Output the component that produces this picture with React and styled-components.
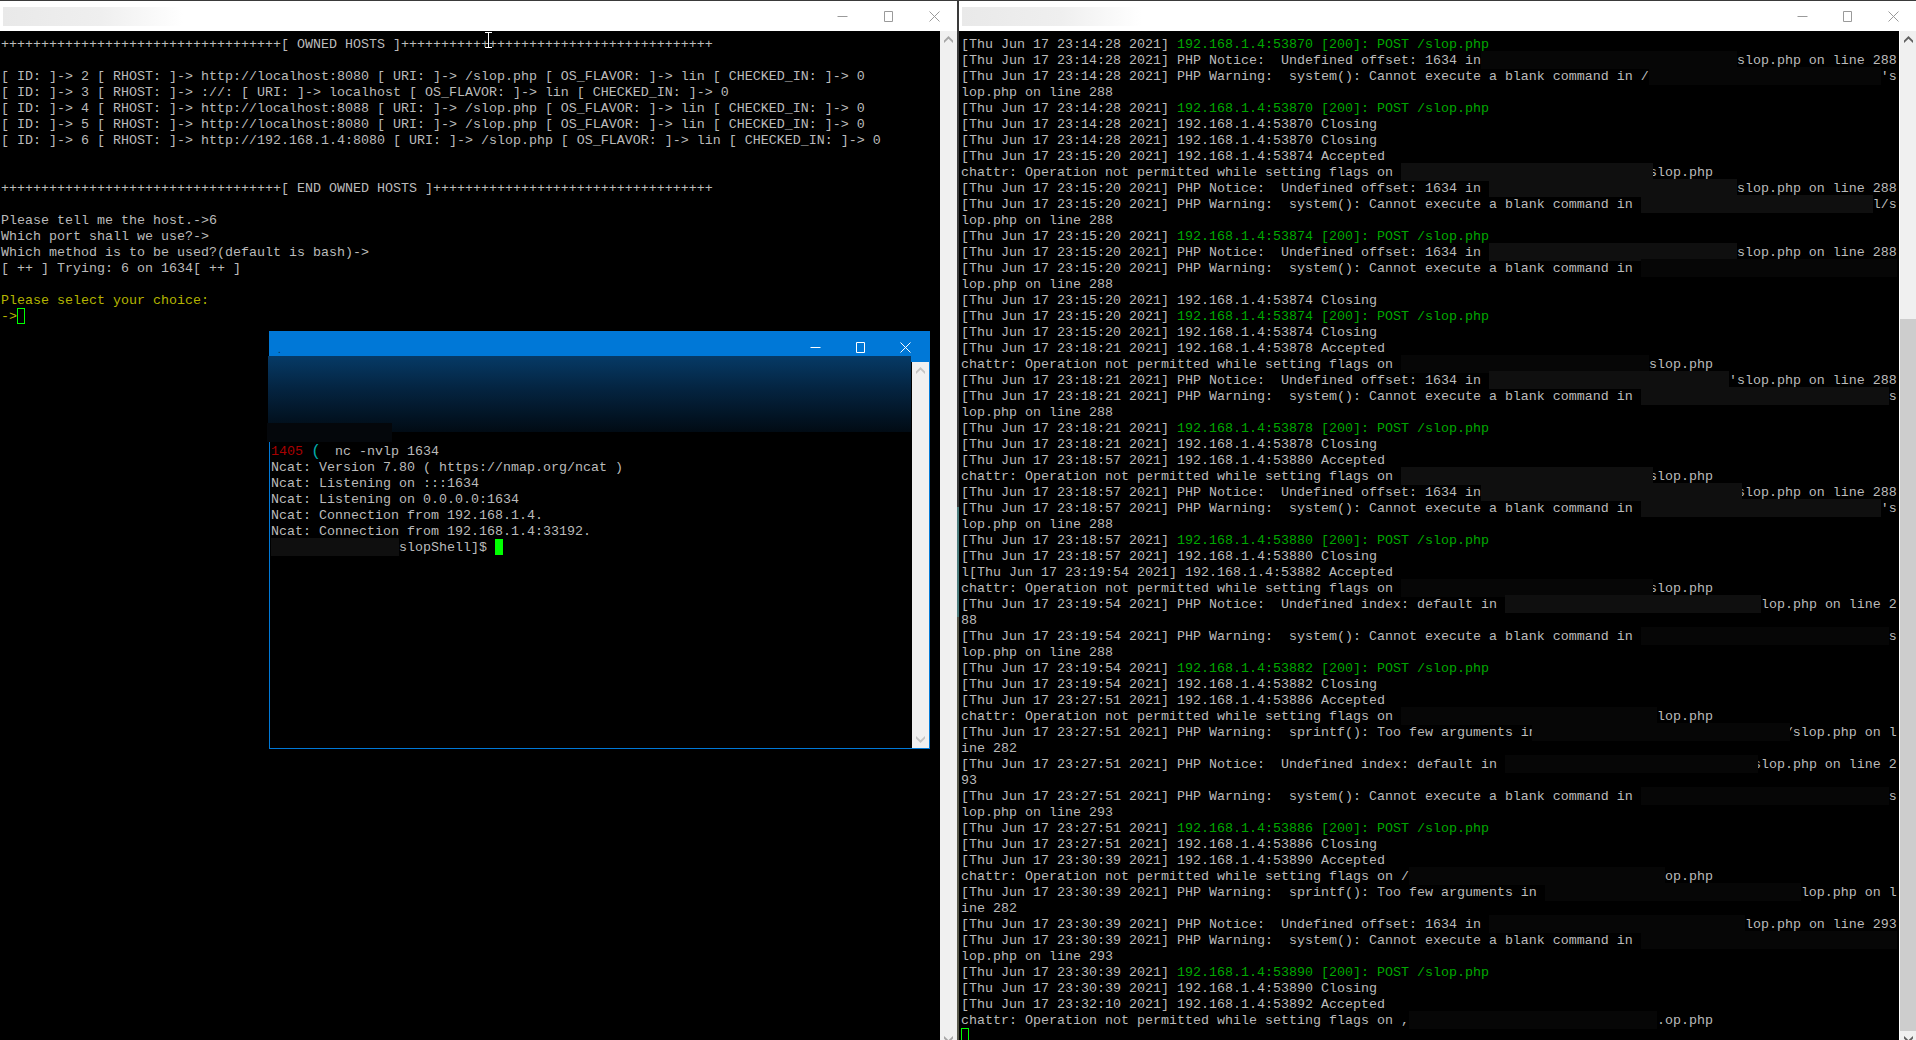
import React from "react";
import styled, { createGlobalStyle } from "styled-components";

const GlobalStyle = createGlobalStyle`
  html, body {
    margin: 0;
    padding: 0;
    height: 100%;
    background: #000;
    overflow: hidden;
  }
`;

const Desktop = styled.div`
  position: relative;
  display: flex;
  width: 1916px;
  height: 1040px;
  overflow: hidden;
  background: #000;
`;

const Window = styled.section`
  position: relative;
  display: flex;
  flex-direction: column;
  width: ${(p) => p.$width}px;
  height: 100%;
  flex: none;
  border-top: 1px solid #3a3a3a;
  box-sizing: border-box;
`;

const Divider = styled.div`
  flex: none;
  width: 2px;
  height: 100%;
  background: linear-gradient(
    to bottom,
    #3a3a3a 0,
    #3a3a3a 507px,
    #4c7c7c 507px,
    #4c7c7c 617px,
    #57574a 617px,
    #57574a 100%
  );
`;

const TitleBar = styled.header`
  flex: none;
  display: flex;
  align-items: center;
  height: 30px;
  background: #fff;
`;

const BlurredTitle = styled.div`
  width: 180px;
  height: 19px;
  margin-left: 3px;
  background: linear-gradient(to right, #e9e9e9 0, #efefef 55%, #fff 100%);
`;

const Controls = styled.div`
  display: flex;
  margin-left: auto;
`;

const ControlButton = styled.div`
  display: flex;
  align-items: center;
  justify-content: center;
  width: ${(p) => p.$size}px;
  height: 30px;
  color: ${(p) => p.$color || "#9a9a9a"};
`;

const Body = styled.div`
  flex: 1;
  display: flex;
  min-height: 0;
`;

// the maximised windows run a little past the bottom of the screen
const Pane = styled(Body)`
  flex: none;
  height: 1017px;
`;

const Console = styled.div`
  flex: 1;
  min-width: 0;
  padding: ${(p) => p.$top || 6}px 0 0 ${(p) => p.$left || 1}px;
  background: #000;
  overflow: hidden;
  font-family: "Liberation Mono", "Courier New", monospace;
  font-size: 13.333px;
  line-height: 16px;
  color: #bbbbbb;
`;

const Row = styled.div`
  height: 16px;
  white-space: pre;
`;

const Green = styled.span`
  color: #00a800;
`;

const Yellow = styled.span`
  color: #b4b400;
`;

const Red = styled.span`
  color: #a80000;
`;

const TealArc = styled.span`
  display: inline-block;
  width: 8px;
  font-size: 17px;
  line-height: 16px;
  vertical-align: top;
  color: #00a8a8;
`;

const Mask = styled.span`
  position: relative;
  z-index: 1;
  display: inline-block;
  width: ${(p) => p.$cols * 8 + (p.$over || 0) + (p.$pull || 0)}px;
  height: 18px;
  margin: -2px ${(p) => -(p.$over || 0)}px 0 ${(p) => -(p.$pull || 0)}px;
  vertical-align: top;
  background: ${(p) => (p.$soft ? "#060606" : "#0f0f0f")};
`;

const OutlineCursor = styled.span`
  display: inline-block;
  width: 8px;
  height: 16px;
  margin-top: -1px;
  box-sizing: border-box;
  vertical-align: top;
  border: 1px solid #00ff00;
`;

const BlockCursor = styled.span`
  display: inline-block;
  width: 8px;
  height: 16px;
  margin-top: -1px;
  vertical-align: top;
  background: #00ff00;
`;

const Scrollbar = styled.div`
  flex: none;
  display: flex;
  flex-direction: column;
  width: ${(p) => p.$width || 17}px;
  background: #f0f0f0;
  border-left: ${(p) => (p.$edge ? "1px solid #fff" : "none")};
`;

const ArrowCell = styled.div`
  flex: none;
  display: flex;
  align-items: center;
  justify-content: center;
  height: 17px;
  color: ${(p) => p.$color || "#a6a6a6"};
`;

const Track = styled.div`
  flex: ${(p) => (p.$fixed ? "none" : 1)};
  height: ${(p) => (p.$fixed ? `${p.$fixed}px` : "auto")};
`;

const Thumb = styled.div`
  flex: 1;
  background: #cdcdcd;
`;

const ShellWindow = styled.section`
  position: absolute;
  left: 269px;
  top: 331px;
  display: flex;
  flex-direction: column;
  width: 661px;
  height: 418px;
  box-sizing: border-box;
  border: 1px solid #0078d7;
  z-index: 2;
`;

const ShellTitleBar = styled.header`
  flex: none;
  display: flex;
  align-items: center;
  height: 30px;
  padding-left: 8px;
  background: #0078d7;
`;

const ShellTitle = styled.span`
  margin-top: 4px;
  font-family: "Liberation Sans", Arial, sans-serif;
  font-size: 10px;
  color: #0b2a44;
`;

const Banner = styled.div`
  position: absolute;
  left: -2px;
  top: 24px;
  width: 643px;
  height: 76px;
  background: linear-gradient(to bottom, #063a66 0, #04233f 45%, #010b14 100%);
`;

const BannerMask = styled.div`
  position: absolute;
  left: -3px;
  top: 91px;
  width: 125px;
  height: 19px;
  background: #04070b;
`;

const IBeam = styled.svg`
  position: absolute;
  left: 484px;
  top: 31px;
  z-index: 1;
`;

const Minimize = () => (
  <svg width="11" height="11" viewBox="0 0 11 11" fill="none" stroke="currentColor">
    <path d="M.5 5.5h10" />
  </svg>
);

const Maximize = () => (
  <svg width="11" height="11" viewBox="0 0 11 11" fill="none" stroke="currentColor">
    <path d="M1.5.5h8v10h-8z" />
  </svg>
);

const Close = () => (
  <svg width="11" height="11" viewBox="0 0 11 11" fill="none" stroke="currentColor">
    <path d="M.5.5l10 10M10.5.5l-10 10" />
  </svg>
);

const ChevronUp = () => (
  <svg width="9" height="7" viewBox="0 0 9 7" fill="currentColor">
    <path d="M4.5 0L9 4.5V7L4.5 2.8 0 7V4.5z" />
  </svg>
);

const ChevronDown = () => (
  <svg width="9" height="7" viewBox="0 0 9 7" fill="currentColor">
    <path d="M4.5 7L9 2.5V0L4.5 4.2 0 0v2.5z" />
  </svg>
);

const WindowButtons = ({ color, sizes }) => (
  <Controls>
    <ControlButton $color={color} $size={sizes[0]}>
      <Minimize />
    </ControlButton>
    <ControlButton $color={color} $size={sizes[1]}>
      <Maximize />
    </ControlButton>
    <ControlButton $color={color} $size={sizes[2]}>
      <Close />
    </ControlButton>
  </Controls>
);

const host = (id, rhost, uri) =>
  `[ ID: ]-> ${id} [ RHOST: ]-> ${rhost} [ URI: ]-> ${uri} [ OS_FLAVOR: ]-> lin [ CHECKED_IN: ]-> 0`;

const ownedHosts = [
  `${"+".repeat(35)}[ OWNED HOSTS ]${"+".repeat(39)}`,
  "",
  host(2, "http://localhost:8080", "/slop.php"),
  host(3, "://:", "localhost"),
  host(4, "http://localhost:8088", "/slop.php"),
  host(5, "http://localhost:8080", "/slop.php"),
  host(6, "http://192.168.1.4:8080", "/slop.php"),
  "",
  "",
  `${"+".repeat(35)}[ END OWNED HOSTS ]${"+".repeat(35)}`,
  "",
  "Please tell me the host.->6",
  "Which port shall we use?->",
  "Which method is to be used?(default is bash)->",
  "[ ++ ] Trying: 6 on 1634[ ++ ]",
  "",
];

const ncat = [
  "Ncat: Version 7.80 ( https://nmap.org/ncat )",
  "Ncat: Listening on :::1634",
  "Ncat: Listening on 0.0.0.0:1634",
  "Ncat: Connection from 192.168.1.4.",
  "Ncat: Connection from 192.168.1.4:33192.",
];

// each log row: plain text, a green post row, or [before, mask, after]
const stamp = (t) => `[Thu Jun 17 ${t} 2021] `;
const chattr = "chattr: Operation not permitted while setting flags on ";
const post = (t, port) => ({ ts: stamp(t), green: `192.168.1.4:${port} [200]: POST /slop.php` });
const state = (t, port, word) => `${stamp(t)}192.168.1.4:${port} ${word}`;
const offset = (t) => `${stamp(t)}PHP Notice:  Undefined offset: 1634 in `;
const index = (t) => `${stamp(t)}PHP Notice:  Undefined index: default in `;
const blank = (t) => `${stamp(t)}PHP Warning:  system(): Cannot execute a blank command in `;
const few = (t) => `${stamp(t)}PHP Warning:  sprintf(): Too few arguments in `;

const log = [
  post("23:14:28", 53870),
  [offset("23:14:28"), { cols: 31, pull: 8, soft: true }, "slop.php on line 288"],
  [`${blank("23:14:28")}/`, { cols: 29, soft: true }, "'s"],
  "lop.php on line 288",
  post("23:14:28", 53870),
  state("23:14:28", 53870, "Closing"),
  state("23:14:28", 53870, "Closing"),
  state("23:15:20", 53874, "Accepted"),
  [chattr, { cols: 31, over: 4 }, "slop.php"],
  [offset("23:15:20"), { cols: 31 }, "slop.php on line 288"],
  [blank("23:15:20"), { cols: 29 }, "l/s"],
  "lop.php on line 288",
  post("23:15:20", 53874),
  [offset("23:15:20"), { cols: 31 }, "slop.php on line 288"],
  [blank("23:15:20"), { cols: 32, soft: true }, ""],
  "lop.php on line 288",
  state("23:15:20", 53874, "Closing"),
  post("23:15:20", 53874),
  state("23:15:20", 53874, "Closing"),
  state("23:18:21", 53878, "Accepted"),
  [chattr, { cols: 31, soft: true }, "slop.php"],
  [offset("23:18:21"), { cols: 30 }, "'slop.php on line 288"],
  [blank("23:18:21"), { cols: 31 }, "s"],
  "lop.php on line 288",
  post("23:18:21", 53878),
  state("23:18:21", 53878, "Closing"),
  state("23:18:57", 53880, "Accepted"),
  [chattr, { cols: 31, over: 4 }, "slop.php"],
  [offset("23:18:57"), { cols: 31, over: 5, pull: 8 }, "slop.php on line 288"],
  [blank("23:18:57"), { cols: 30 }, "'s"],
  "lop.php on line 288",
  post("23:18:57", 53880),
  state("23:18:57", 53880, "Closing"),
  `l${state("23:19:54", 53882, "Accepted")}`,
  [chattr, { cols: 31, over: 4, soft: true }, "slop.php"],
  [index("23:19:54"), { cols: 32 }, "lop.php on line 2"],
  "88",
  [blank("23:19:54"), { cols: 31, soft: true }, "s"],
  "lop.php on line 288",
  post("23:19:54", 53882),
  state("23:19:54", 53882, "Closing"),
  state("23:27:51", 53886, "Accepted"),
  [chattr, { cols: 32, soft: true }, "lop.php"],
  [few("23:27:51"), { cols: 30, over: 5, pull: 13, soft: true }, "/slop.php on l"],
  "ine 282",
  [index("23:27:51"), { cols: 31, over: 5, soft: true }, "slop.php on line 2"],
  "93",
  [blank("23:27:51"), { cols: 31, soft: true }, "s"],
  "lop.php on line 293",
  post("23:27:51", 53886),
  state("23:27:51", 53886, "Closing"),
  state("23:30:39", 53890, "Accepted"),
  [`${chattr}/`, { cols: 32, soft: true }, "op.php"],
  [few("23:30:39"), { cols: 32, soft: true }, "lop.php on l"],
  "ine 282",
  [offset("23:30:39"), { cols: 32, soft: true }, "lop.php on line 293"],
  [blank("23:30:39"), { cols: 32, soft: true }, ""],
  "lop.php on line 293",
  post("23:30:39", 53890),
  state("23:30:39", 53890, "Closing"),
  state("23:32:10", 53892, "Accepted"),
  [`${chattr},`, { cols: 31, soft: true }, ".op.php"],
];

const LogRow = ({ row }) => {
  if (typeof row === "string") return <Row>{row}</Row>;
  if (Array.isArray(row)) {
    const [before, mask, after] = row;
    return (
      <Row>
        {before}
        <Mask $cols={mask.cols} $over={mask.over} $pull={mask.pull} $soft={mask.soft} />
        {after}
      </Row>
    );
  }
  return (
    <Row>
      {row.ts}
      <Green>{row.green}</Green>
    </Row>
  );
};

export default function App() {
  return (
    <Desktop>
      <GlobalStyle />

      <Window $width={957}>
        <TitleBar>
          <BlurredTitle />
          <WindowButtons sizes={[45, 46, 46]} />
        </TitleBar>
        <Pane>
          <Console>
            {ownedHosts.map((line, i) => (
              <Row key={i}>{line}</Row>
            ))}
            <Row>
              <Yellow>Please select your choice:</Yellow>
            </Row>
            <Row>
              <Yellow>-&gt;</Yellow>
              <OutlineCursor />
            </Row>
          </Console>
          <Scrollbar>
            <ArrowCell>
              <ChevronUp />
            </ArrowCell>
            <Track />
            <ArrowCell>
              <ChevronDown />
            </ArrowCell>
          </Scrollbar>
        </Pane>
        <IBeam width="9" height="16" viewBox="0 0 9 16" fill="none" stroke="#fff">
          <path d="M1 .5h7M1 15.5h7M4.5 .5v15" />
        </IBeam>
      </Window>

      <Divider />

      <Window $width={957}>
        <TitleBar>
          <BlurredTitle />
          <WindowButtons sizes={[45, 45, 46]} />
        </TitleBar>
        <Pane>
          <Console $left={2}>
            {log.map((row, i) => (
              <LogRow key={i} row={row} />
            ))}
            <Row>
              <OutlineCursor />
            </Row>
          </Console>
          <Scrollbar $width={16} $edge>
            <ArrowCell $color="#606060">
              <ChevronUp />
            </ArrowCell>
            <Track $fixed={271} />
            <Thumb />
            <ArrowCell $color="#606060">
              <ChevronDown />
            </ArrowCell>
          </Scrollbar>
        </Pane>
      </Window>

      <ShellWindow>
        <ShellTitleBar>
          <ShellTitle>.</ShellTitle>
          <WindowButtons color="#fff" sizes={[46, 44, 47]} />
        </ShellTitleBar>
        <Banner />
        <BannerMask />
        <Body>
          <Console $top={82} $left={1}>
            <Row>
              <Red>1405</Red> <TealArc>(</TealArc>
              {"  nc -nvlp 1634"}
            </Row>
            {ncat.map((line) => (
              <Row key={line}>{line}</Row>
            ))}
            <Row>
              <Mask $cols={16} />
              {"slopShell]$ "}
              <BlockCursor />
            </Row>
          </Console>
          <Scrollbar>
            <ArrowCell $color="#c4c4c4">
              <ChevronUp />
            </ArrowCell>
            <Track />
            <ArrowCell $color="#c4c4c4">
              <ChevronDown />
            </ArrowCell>
          </Scrollbar>
        </Body>
      </ShellWindow>
    </Desktop>
  );
}
